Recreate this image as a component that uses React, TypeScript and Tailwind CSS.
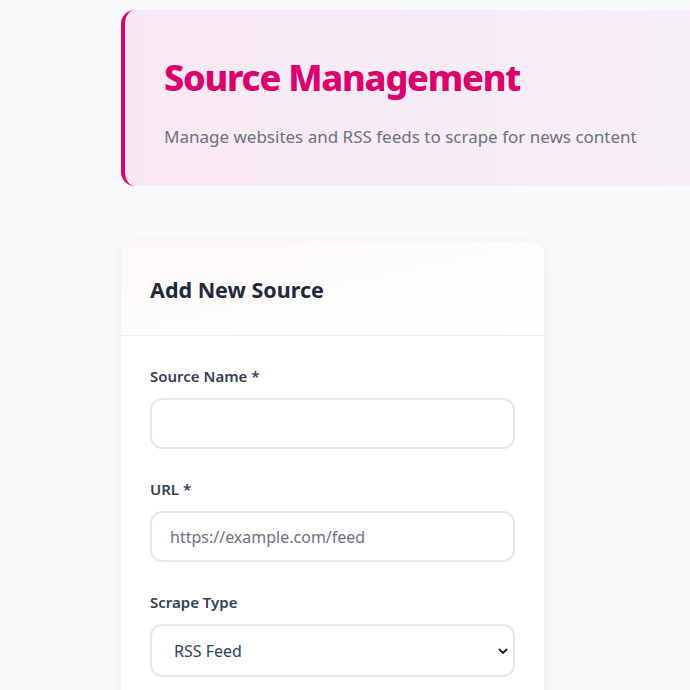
import React from "react";

export default function App() {
  const font = { fontFamily: '"Noto Sans", "Open Sans", sans-serif' };
  return (
    <div className="min-h-[690px] w-[690px] overflow-hidden bg-[#f8fafc]" style={font}>
      <div className="pl-[121px] pt-[10px]">
        <div className="h-[176px] rounded-l-[14px] border-l-[4px] border-[#e2006f] bg-gradient-to-r from-[#f8e8f2] to-[#f7eff6] pl-[39px] pt-[46px]">
          <h1 className="text-[36px] font-extrabold leading-[44px] tracking-[-1.2px] text-[#dc006c]">Source Management</h1>
          <p className="mt-[25px] text-[17px] leading-[24px] text-[#6b7280]">Manage websites and RSS feeds to scrape for news content</p>
        </div>

        <div className="mt-[55px] w-[423px] rounded-[14px] bg-white shadow-[0_4px_20px_rgba(15,23,42,0.06)]">
          <div className="h-[95px] rounded-t-[14px] border-b border-[#eceef1] bg-gradient-to-br from-[#fdf8fa] to-white px-[29px] pt-[36px]">
            <h2 className="text-[21.5px] font-bold leading-[26px] text-[#1e293b]">Add New Source</h2>
          </div>
          <div className="px-[29px] pt-[30px]">
            <label className="block text-[15px] font-semibold leading-[20px] text-[#334155]">Source Name *</label>
            <div className="mt-[12px] h-[51px] rounded-[12px] border-2 border-[#e5e7eb] bg-white"></div>

            <label className="mt-[30px] block text-[15px] font-semibold leading-[20px] text-[#334155]">URL *</label>
            <div className="mt-[12px] flex h-[51px] items-center rounded-[12px] border-2 border-[#e5e7eb] bg-white pl-[18px] text-[16px] text-[#6b7280]">https://example.com/feed</div>

            <label className="mt-[30px] block text-[15px] font-semibold leading-[20px] text-[#334155]">Scrape Type</label>
            <div className="mt-[12px] flex h-[53px] items-center justify-between rounded-[12px] border-2 border-[#e5e7eb] bg-white pl-[22px] pr-[4px] text-[16px] text-[#334155]">
              <span>RSS Feed</span>
              <svg width="12" height="12" viewBox="0 0 12 12" fill="none" stroke="#1f2937" strokeWidth="2" strokeLinecap="round" strokeLinejoin="round"><path d="M2.5 4.5 6 8l3.5-3.5" /></svg>
            </div>
            <div className="h-[40px]"></div>
          </div>
        </div>
      </div>
    </div>
  );
}
